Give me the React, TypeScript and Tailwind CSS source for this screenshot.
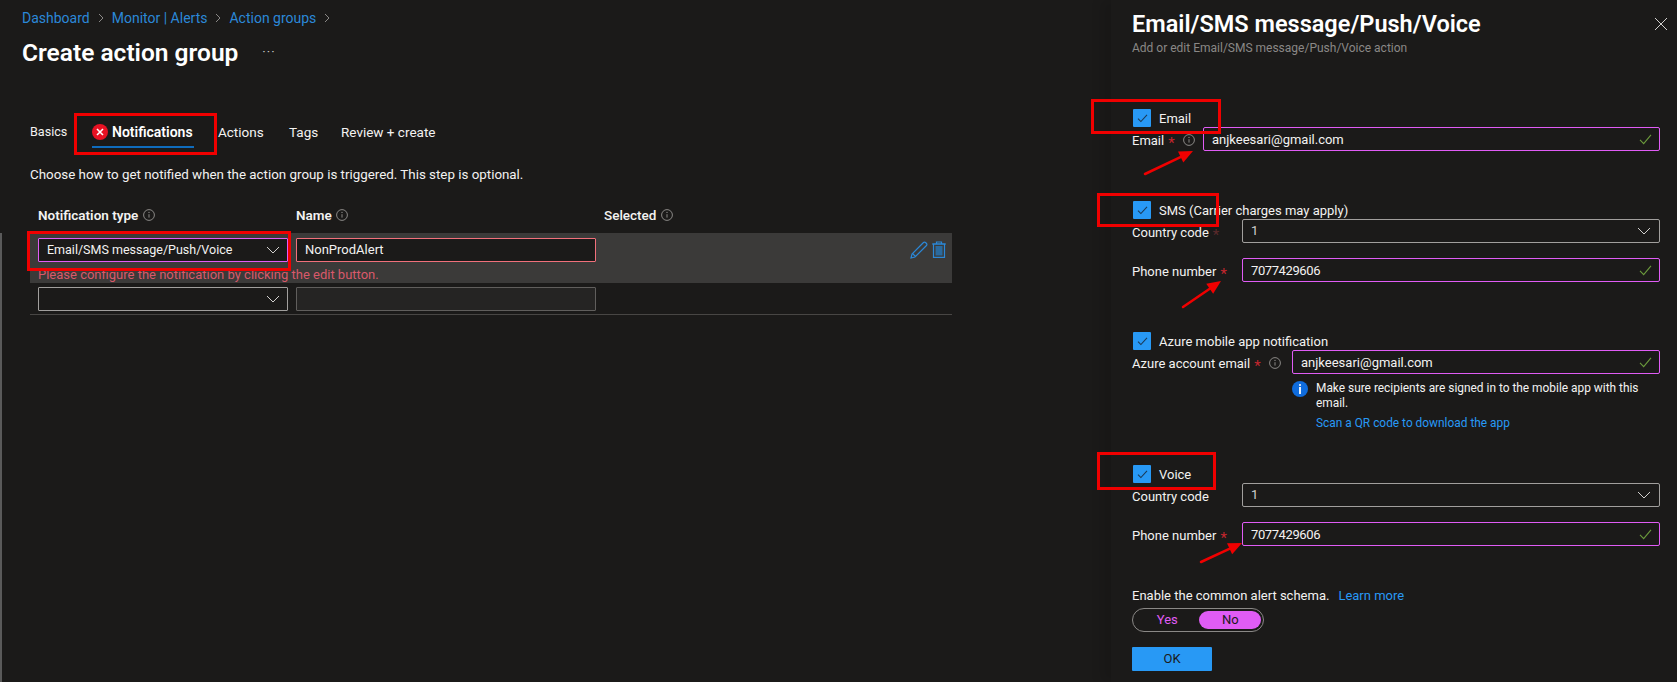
import type { ReactNode } from "react";

const pink = "border-[#e05cf5]";

function InfoIcon({ className = "" }: { className?: string }) {
  return (
    <svg viewBox="0 0 12 12" className={`h-3 w-3 shrink-0 ${className}`} fill="none">
      <circle cx="6" cy="6" r="5.4" stroke="#8a8886" strokeWidth="1" />
      <path d="M6 5.2v3.4" stroke="#8a8886" strokeWidth="1" />
      <circle cx="6" cy="3.4" r="0.7" fill="#8a8886" />
    </svg>
  );
}

function Chevron({ className = "" }: { className?: string }) {
  return (
    <svg viewBox="0 0 14 8" className={`h-2 w-[14px] ${className}`} fill="none">
      <path d="M1 1l6 6 6-6" stroke="#d2d0ce" strokeWidth="1" />
    </svg>
  );
}

function Check() {
  return (
    <svg viewBox="0 0 14 12" className="h-[11px] w-[13px]" fill="none">
      <path d="M1 6.5l4 4L13 1" stroke="#6b9a3c" strokeWidth="1.2" />
    </svg>
  );
}

function CheckRow({ label, className = "" }: { label: string; className?: string }) {
  return (
    <div className={`flex h-[18px] items-center ${className}`}>
      <span className="flex h-[18px] w-[18px] items-center justify-center rounded-[1px] bg-[#2899f5]">
        <svg viewBox="0 0 12 10" className="h-[9px] w-[11px]" fill="none">
          <path d="M1 5.2l3.2 3.2L11 1" stroke="#1b3a57" strokeWidth="1.2" />
        </svg>
      </span>
      <span className="ml-2 text-[13px] leading-none text-[#f3f2f1]">{label}</span>
    </div>
  );
}

function TextBox({ value, textClass = "" }: { value: string; textClass?: string }) {
  return (
    <div className={`flex h-6 min-w-0 flex-1 items-center justify-between border ${pink} rounded-[2px] pl-2 pr-[7px] text-[13px] text-[#f3f2f1]`}>
      <span className={`pt-[1px] ${textClass}`}>{value}</span>
      <Check />
    </div>
  );
}

function SelectBox({ value }: { value: string }) {
  return (
    <div className="flex h-6 min-w-0 flex-1 items-center justify-between rounded-[2px] border border-[#a19f9d] pl-2 pr-[8px] text-[13px] text-[#d2d0ce]">
      <span>{value}</span>
      <Chevron />
    </div>
  );
}

function Field({ label, labelWidth, starColor = "text-[#c4262e]", info, children, className = "" }: { label: string; labelWidth: string; starColor?: string; info?: ReactNode; children: ReactNode; className?: string }) {
  return (
    <div className={`flex items-start ${className}`}>
      <div className={`flex h-[28px] shrink-0 items-center pb-[2px] text-[13px] leading-none text-[#f3f2f1] ${labelWidth}`}>
        <span>{label}</span>
        <span className={`mt-[6px] ml-1 text-[15px] ${starColor}`}>*</span>
        {info}
      </div>
      {children}
    </div>
  );
}

function RedBox({ className }: { className: string }) {
  return <div className={`pointer-events-none absolute border-[3px] border-[#f00000] ${className}`} />;
}

function Arrow({ x1, y1, x2, y2 }: { x1: number; y1: number; x2: number; y2: number }) {
  const angle = Math.atan2(y2 - y1, x2 - x1);
  const head = 15;
  const spread = 0.42;
  const ax = x2 - head * Math.cos(angle - spread);
  const ay = y2 - head * Math.sin(angle - spread);
  const bx = x2 - head * Math.cos(angle + spread);
  const by = y2 - head * Math.sin(angle + spread);
  const mx = x2 - 11 * Math.cos(angle);
  const my = y2 - 11 * Math.sin(angle);
  return (
    <>
      <line x1={x1} y1={y1} x2={mx} y2={my} stroke="#f00000" strokeWidth="2.5" strokeLinecap="round" />
      <polygon points={`${x2},${y2} ${ax},${ay} ${bx},${by}`} fill="#f00000" />
    </>
  );
}

function Breadcrumb() {
  const items = ["Dashboard", "Monitor | Alerts", "Action groups"];
  return (
    <div className="flex h-[18px] items-center text-[14px] leading-none text-[#2b88d8]">
      {items.map((item) => (
        <span key={item} className="flex items-center">
          <span>{item}</span>
          <svg viewBox="0 0 6 10" className="mx-[8px] h-[10px] w-[6px]" fill="none">
            <path d="M1 1l4 4-4 4" stroke="#8a8886" strokeWidth="1" />
          </svg>
        </span>
      ))}
    </div>
  );
}

function LeftPane() {
  return (
    <div className="w-[1111px] shrink-0 pt-[9px]">
      <div className="pl-[22px]">
        <Breadcrumb />
        <div className="mt-2 mb-[1px] flex h-9 items-center">
          <h1 className="text-[24.5px] leading-none font-semibold text-white">Create action group</h1>
          <span className="ml-6 mb-1 text-[13px] leading-none tracking-[1px] text-[#c8c6c4]">···</span>
        </div>
      </div>

      <div className="mt-[51px] flex h-[26px] items-start pl-[30px] text-[13.5px] leading-[20px] text-[#f3f2f1]">
        <span className="w-[62px] text-[12.6px]">Basics</span>
        <div className="mr-6 flex h-[26px] w-[102px] flex-col">
          <div className="flex items-center">
            <span className="mr-1 flex h-4 w-4 items-center justify-center rounded-full bg-[#e81123]">
              <svg viewBox="0 0 8 8" className="h-2 w-2" fill="none">
                <path d="M1 1l6 6M7 1L1 7" stroke="#fff" strokeWidth="1.6" />
              </svg>
            </span>
            <span className="text-[14px] font-semibold text-white">Notifications</span>
          </div>
          <div className="mt-auto h-[2px] bg-[#0f6cbd]" />
        </div>
        <span className="w-[71px]">Actions</span>
        <span className="w-[52px]">Tags</span>
        <span>Review + create</span>
      </div>

      <p className="mt-[18px] pl-[30px] text-[13.35px] leading-[18px] text-[#f3f2f1]">
        Choose how to get notified when the action group is triggered. This step is optional.
      </p>

      <div className="mt-5 ml-[30px] w-[922px]">
        <div className="grid h-[29px] grid-cols-[258px_308px_1fr] items-start pl-2 text-[13.5px] leading-[22px] font-semibold text-[#f3f2f1]">
          <span className="flex items-center gap-[5px]">Notification type <InfoIcon /></span>
          <span className="flex items-center gap-1">Name <InfoIcon /></span>
          <span className="flex items-center gap-[5px] font-medium">Selected <InfoIcon /></span>
        </div>
        <div className="relative h-[50px] bg-[#3b3a39] pt-[5px] pl-2">
          <div className="flex gap-2">
            <div className={`flex h-6 w-[250px] items-center justify-between rounded-[1px] border ${pink} bg-[#1b1a19] pl-2 pr-[7px] text-[12.5px] text-[#f3f2f1]`}>
              <span>Email/SMS message/Push/Voice</span>
              <Chevron />
            </div>
            <div className="flex h-6 w-[300px] items-center rounded-[1px] border border-[#f1707b] bg-[#1b1a19] pl-2 text-[13px] text-[#f3f2f1]">
              NonProdAlert
            </div>
            <div className="ml-auto mt-[3px] mr-[6px] flex items-start gap-[4px]">
              <svg viewBox="0 0 18 18" className="h-[18px] w-[18px]" fill="none">
                <path d="M1 17l1-4L13.5 1.5a1.4 1.4 0 0 1 2 0l1 1a1.4 1.4 0 0 1 0 2L5 16z" stroke="#2b88d8" strokeWidth="1.2" />
                <path d="M2.5 12.5l3 3" stroke="#2b88d8" strokeWidth="1.2" />
              </svg>
              <svg viewBox="0 0 14 17" className="h-[17px] w-[14px]" fill="none">
                <path d="M0 3h14M4.5 3V1h5v2" stroke="#2b88d8" strokeWidth="1.2" />
                <path d="M1.5 3v13.4h11V3z" stroke="#2b88d8" strokeWidth="1.2" />
                <rect x="3.5" y="5" width="7" height="9.5" fill="#2b6a9e" />
              </svg>
            </div>
          </div>
          <p className="mt-[5px] text-[13px] leading-[16px] text-[#d9596a]">Please configure the notification by clicking the edit button.</p>
        </div>
        <div className="flex h-8 gap-2 border-b border-[#484644] pt-1 pl-2">
          <div className="flex h-6 w-[250px] items-center justify-end rounded-[1px] border border-[#a19f9d] pr-[7px]">
            <Chevron />
          </div>
          <div className="h-6 w-[300px] rounded-[1px] border border-[#605e5c] bg-[#252423]" />
        </div>
      </div>
    </div>
  );
}

function RightPane() {
  return (
    <div className="relative min-w-0 flex-1 pt-[9px] pr-[17px] pl-[21px] shadow-[-10px_0_10px_rgba(0,0,0,0.1)]">
      <h2 className="text-[23.5px] leading-[30px] font-semibold text-white">Email/SMS message/Push/Voice</h2>
      <p className="mt-[1px] text-[12px] leading-4 text-[#8a8886]">Add or edit Email/SMS message/Push/Voice action</p>
      <button type="button" className="absolute top-[18px] right-[10px] text-[#d2d0ce]" aria-label="Close">
        <svg viewBox="0 0 12 12" className="h-3 w-3" fill="none">
          <path d="M0 0l12 12M12 0L0 12" stroke="currentColor" strokeWidth="1" />
        </svg>
      </button>

      <CheckRow label="Email" className="mt-[53px] ml-[1px]" />
      <Field label="Email" labelWidth="w-[71px]" info={<InfoIcon className="ml-[8px]" />}>
        <TextBox value="anjkeesari@gmail.com" />
      </Field>

      <CheckRow label="SMS (Carrier charges may apply)" className="mt-[46px] ml-[1px]" />
      <Field label="Country code" labelWidth="w-[110px]" starColor="text-[#5c2a2c]">
        <SelectBox value="1" />
      </Field>
      <Field label="Phone number" labelWidth="w-[110px]" className="mt-[11px]">
        <TextBox value="7077429606" textClass="tracking-[-0.4px]" />
      </Field>

      <CheckRow label="Azure mobile app notification" className="mt-[46px] ml-[1px]" />
      <Field label="Azure account email" labelWidth="w-[160px]" info={<InfoIcon className="ml-[8px]" />}>
        <div className="min-w-0 flex-1">
          <TextBox value="anjkeesari@gmail.com" />
          <div className="mt-[7px] flex">
            <span className="flex h-4 w-4 shrink-0 items-center justify-center rounded-full bg-[#0f6cdd]">
              <svg viewBox="0 0 4 10" className="h-[10px] w-1" fill="#fff">
                <circle cx="2" cy="1" r="1" />
                <rect x="1.1" y="3" width="1.8" height="7" />
              </svg>
            </span>
            <div className="ml-2 text-[11.9px] leading-[15px] text-[#f3f2f1]">
              <p>Make sure recipients are signed in to the mobile app with this email.</p>
              <a className="mt-[5px] block text-[#2899f5]">Scan a QR code to download the app</a>
            </div>
          </div>
        </div>
      </Field>

      <CheckRow label="Voice" className="mt-[34px] ml-[1px]" />
      <div className="flex items-start">
        <div className="flex h-[28px] w-[110px] shrink-0 items-center pb-[2px] text-[13px] leading-none text-[#f3f2f1]">Country code</div>
        <SelectBox value="1" />
      </div>
      <Field label="Phone number" labelWidth="w-[110px]" className="mt-[11px]">
        <TextBox value="7077429606" textClass="tracking-[-0.4px]" />
      </Field>

      <p className="mt-[38px] text-[13px] leading-4 text-[#f3f2f1]">
        Enable the common alert schema.<a className="ml-[9px] text-[#2899f5]">Learn more</a>
      </p>
      <div className="mt-[4px] flex h-6 w-[132px] items-center rounded-full border border-[#8a8886] px-[2px] text-[13px]">
        <span className="w-[65px] text-center text-[#e05cf5]">Yes</span>
        <span className="flex h-[18px] w-[62px] items-center justify-center rounded-full bg-[#e05cf5] text-[#1b1a19]">No</span>
      </div>
      <button type="button" className="mt-[15px] block h-6 w-20 rounded-[1px] bg-[#2899f5] text-[13px] text-[#1b1a19]">OK</button>
    </div>
  );
}

export default function App() {
  return (
    <div className="relative flex h-[682px] w-[1677px] overflow-hidden bg-[#1b1a19] font-['Roboto',sans-serif]">
      <LeftPane />
      <RightPane />

      {/* sliver of the portal sidebar at the very left edge */}
      <div className="absolute top-[233px] bottom-0 left-0 w-[2px] bg-[#5a5a5a]" />

      <RedBox className="top-[113px] left-[74px] h-[42px] w-[143px]" />
      <RedBox className="top-[231px] left-[27px] h-[40px] w-[264px]" />
      <RedBox className="top-[99px] left-[1091px] h-[35px] w-[130px]" />
      <RedBox className="top-[193px] left-[1097px] h-[34px] w-[122px]" />
      <RedBox className="top-[452px] left-[1097px] h-[38px] w-[119px]" />

      <svg className="pointer-events-none absolute inset-0 h-[682px] w-[1677px]" viewBox="0 0 1677 682">
        <Arrow x1={1145} y1={174} x2={1193} y2={151} />
        <Arrow x1={1183} y1={307} x2={1221} y2={281} />
        <Arrow x1={1201} y1={562} x2={1242} y2={543} />
      </svg>
    </div>
  );
}
